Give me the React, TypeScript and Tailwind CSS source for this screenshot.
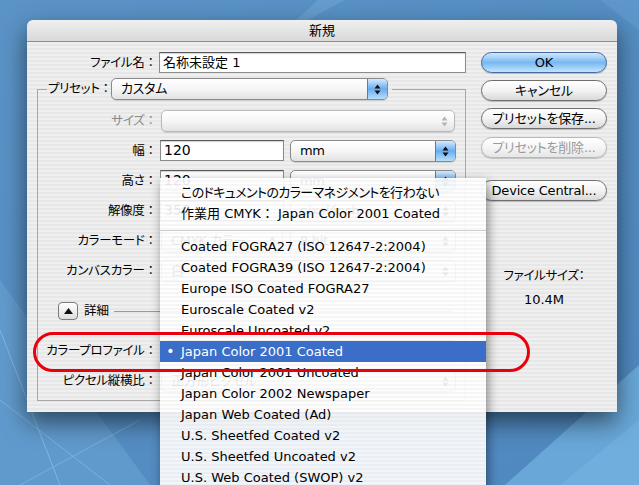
import React from 'react';

const UI = "font-['DejaVu_Sans','Noto_Sans_CJK_JP',sans-serif]";
const PALT = "[font-feature-settings:'palt']";

const STRIPES =
  'bg-[repeating-linear-gradient(180deg,#efefef_0px,#efefef_2px,#e7e7e7_2px,#e7e7e7_4px)]';

function Arrows({ disabled }: { disabled?: boolean }) {
  const c = disabled ? '#b4b4b4' : '#111';
  return (
    <svg width="7" height="13" viewBox="0 0 7 13">
      <path d="M3.5 1.5 L6.5 5.5 H0.5 Z" fill={c} />
      <path d="M3.5 11.5 L6.5 7.5 H0.5 Z" fill={c} />
    </svg>
  );
}

function Popup({
  value,
  w,
  blue,
  disabled,
  className = '',
}: {
  value?: string;
  w: string;
  blue?: boolean;
  disabled?: boolean;
  className?: string;
}) {
  return (
    <div
      className={`flex h-[22px] ${w} ${className} overflow-hidden rounded-[5px] border ${
        disabled ? 'border-[#b9b9b9]' : 'border-[#8a8a8a]'
      } bg-linear-to-b from-white via-[#f6f6f6] to-[#e2e2e2] shadow-[0_1px_1px_rgba(0,0,0,0.12)]`}
    >
      <div className={`flex-1 truncate pl-[9px] text-[13px] leading-[20px] tracking-[-0.3px] ${PALT}`}>{value}</div>
      <div
        className={`flex w-[20px] items-center justify-center ${
          blue ? 'border-l border-[#4d7fbd] bg-linear-to-b from-[#d4eafd] via-[#68adf0] to-[#b6defd]' : ''
        }`}
      >
        <Arrows disabled={disabled} />
      </div>
    </div>
  );
}

function Field({ value, w, className = '' }: { value: string; w: string; className?: string }) {
  return (
    <div
      className={`h-[21px] ${w} ${className} border border-[#8c8c8c] border-t-[#5a5a5a] bg-white pl-[3px] leading-[19px] shadow-[inset_0_1px_1px_rgba(0,0,0,0.18)]`}
    >
      {value}
    </div>
  );
}

function Label({ text, w, gray }: { text: string; w: string; gray?: boolean }) {
  return (
    <div
      className={`${w} h-[22px] shrink-0 whitespace-nowrap text-right text-[12.5px] leading-[22px] ${
        gray ? 'text-[#8a8a8a]' : 'text-black'
      }`}
    >
      <span className={`${PALT} tracking-[-0.3px]`}>{text}</span>
      <span>：</span>
    </div>
  );
}

function Row({ label, gray, children }: { label: string; gray?: boolean; children: React.ReactNode }) {
  return (
    <div className="flex h-[30px] items-start">
      <Label text={label} w="w-[119px]" gray={gray} />
      {children}
    </div>
  );
}

function Button({
  label,
  primary,
  disabled,
  className = '',
}: {
  label: string;
  primary?: boolean;
  disabled?: boolean;
  className?: string;
}) {
  const look = primary
    ? 'border-[#46689a] bg-linear-to-b from-[#d0e8fc] via-[#78b8f1] to-[#c0e4fe] text-black'
    : disabled
    ? 'border-[#b8b8b8] bg-linear-to-b from-white via-[#f5f5f5] to-[#e6e6e6] text-[#9a9a9a]'
    : 'border-[#6f6f6f] bg-linear-to-b from-white via-[#f3f3f3] to-[#d9d9d9] text-black';
  return (
    <div
      className={`flex h-[21px] w-[126px] items-center justify-center rounded-full border text-[13px] tracking-[-0.2px] shadow-[0_1px_1px_rgba(0,0,0,0.2)] ${look} ${className} ${PALT}`}
    >
      {label}
    </div>
  );
}

function Wallpaper() {
  return (
    <svg className="absolute inset-0" width="639" height="485" viewBox="0 0 639 485">
      <defs>
        <linearGradient id="wp" x1="0" y1="0" x2="1" y2="1">
          <stop offset="0" stopColor="#5b93c7" />
          <stop offset="1" stopColor="#4f88bf" />
        </linearGradient>
      </defs>
      <rect width="639" height="485" fill="url(#wp)" />
      <polygon points="318,0 345,0 300,24 292,24" fill="#7fb4e0" opacity="0.35" />
      <polygon points="600,0 639,0 639,30" fill="#6ba6d6" opacity="0.4" />
      <polygon points="505,485 639,365 639,485" fill="#68a7d8" />
      <polygon points="560,485 639,420 639,485" fill="#74b1df" opacity="0.7" />
      <polygon points="0,280 0,485 150,485" fill="#69a4d4" opacity="0.55" />
      <line x1="0" y1="330" x2="60" y2="485" stroke="#9cc7ea" strokeWidth="1" opacity="0.6" />
      <line x1="0" y1="400" x2="110" y2="485" stroke="#9cc7ea" strokeWidth="1" opacity="0.5" />
      <line x1="20" y1="485" x2="140" y2="420" stroke="#9cc7ea" strokeWidth="1" opacity="0.45" />
    </svg>
  );
}

const MENU: (string | null)[] = [
  'このドキュメントのカラーマネジメントを行わない',
  '作業用 CMYK： Japan Color 2001 Coated',
  null,
  'Coated FOGRA27 (ISO 12647-2:2004)',
  'Coated FOGRA39 (ISO 12647-2:2004)',
  'Europe ISO Coated FOGRA27',
  'Euroscale Coated v2',
  'Euroscale Uncoated v2',
  'Japan Color 2001 Coated',
  'Japan Color 2001 Uncoated',
  'Japan Color 2002 Newspaper',
  'Japan Web Coated (Ad)',
  'U.S. Sheetfed Coated v2',
  'U.S. Sheetfed Uncoated v2',
  'U.S. Web Coated (SWOP) v2',
];

function Menu() {
  return (
    <div className="absolute left-[160px] top-[178px] h-[320px] w-[326px] bg-[repeating-linear-gradient(180deg,rgba(255,255,255,0.92)_0px,rgba(255,255,255,0.92)_2px,rgba(247,247,247,0.92)_2px,rgba(247,247,247,0.92)_4px)] pt-[4px] shadow-[2px_4px_10px_rgba(0,0,0,0.45)]">
      {MENU.map((item, i) =>
        item === null ? (
          <div key={i} className="flex h-[12px] items-center">
            <div className="h-px w-full bg-[#cdcdcd]" />
          </div>
        ) : item === 'Japan Color 2001 Coated' ? (
          <div key={i} className="flex h-[21px] items-center bg-[#3a6ec8] text-[13px] text-white">
            <span className="w-[21px] text-center text-[14px]">•</span>
            <span>{item}</span>
          </div>
        ) : (
          <div
            key={i}
            className={`flex h-[21px] items-center whitespace-pre pl-[21px] text-[13px] text-black ${
              i === 0 ? `${PALT} tracking-[-0.6px]` : ''
            }`}
          >
            {item}
          </div>
        )
      )}
    </div>
  );
}

function Dialog() {
  return (
    <div className="absolute left-[27px] top-[20px] flex h-[392px] w-[590px] flex-col overflow-hidden rounded-t-[6px] shadow-[0_10px_24px_rgba(0,0,0,0.55)]">
      <div className="flex h-[22px] shrink-0 items-center justify-center border-b border-[#8d8d8d] bg-linear-to-b from-[#efefef] to-[#d9d9d9] text-[13px] text-black">
        新規
      </div>
      <div className={`flex flex-1 pt-[10px] ${STRIPES}`}>
        {/* left side */}
        <div className="w-[454px]">
          <div className="flex h-[21px]">
            <Label text="ファイル名" w="w-[130px]" />
            <Field value="名称未設定 1" w="w-[307px]" className="ml-[2px] text-[13px]" />
          </div>

          <div className="ml-[10px] mt-[5px] w-[429px]">
            <div className="flex h-[22px]">
              <div className="mt-[11px] w-[10px] border-l border-t border-[#a7a7a7]" />
              <div className="w-[64px] pl-[1px]">
                <Label text="プリセット" w="w-auto text-left" />
              </div>
              <Popup value="カスタム" w="w-[277px]" blue />
              <div className="ml-[4px] mt-[11px] flex-1 border-r border-t border-[#a7a7a7]" />
            </div>
            <div className="flex h-[301px] flex-col border-b border-l border-r border-[#a7a7a7] pt-[10px]">
              <Row label="サイズ" gray>
                <Popup w="w-[294px]" className="ml-[4px]" disabled />
              </Row>
              <Row label="幅">
                <Field value="120" w="w-[124px]" className="ml-[3px] text-[14px]" />
                <Popup value="mm" w="w-[166px]" className="ml-[6px]" blue />
              </Row>
              <Row label="高さ">
                <Field value="120" w="w-[124px]" className="ml-[3px] text-[14px]" />
                <Popup value="mm" w="w-[166px]" className="ml-[6px]" blue />
              </Row>
              <Row label="解像度">
                <Field value="350" w="w-[124px]" className="ml-[3px] text-[14px]" />
                <Popup value="pixel/inch" w="w-[166px]" className="ml-[6px]" />
              </Row>
              <Row label="カラーモード">
                <Popup value="CMYK カラー" w="w-[122px]" className="ml-[4px]" />
                <Popup value="8 bit" w="w-[166px]" className="ml-[7px]" />
              </Row>
              <Row label="カンバスカラー">
                <Popup value="白" w="w-[295px]" className="ml-[4px]" />
              </Row>

              <div className="mt-[12px] flex h-[18px] items-center">
                <div className="ml-[20px] flex h-[18px] w-[20px] items-center justify-center rounded-[4px] border border-[#7a7a7a] bg-linear-to-b from-white to-[#dedede]">
                  <svg width="9" height="6" viewBox="0 0 9 6">
                    <path d="M4.5 0 L9 6 H0 Z" fill="#111" />
                  </svg>
                </div>
                <span className="ml-[6px] text-[12.5px]">詳細</span>
                <div className="ml-[5px] mr-[12px] h-px flex-1 bg-[#9a9a9a]" />
              </div>

              <div className="mt-[20px]">
                <Row label="カラープロファイル">
                  <Popup value="Japan Color 2001 Coated" w="w-[295px]" className="ml-[4px]" />
                </Row>
                <Row label="ピクセル縦横比">
                  <Popup value="正方形ピクセル" w="w-[295px]" className="ml-[4px]" />
                </Row>
              </div>
            </div>
          </div>
        </div>

        {/* right side */}
        <div className="flex w-[126px] flex-col items-center">
          <Button label="OK" primary />
          <Button label="キャンセル" className="mt-[7px]" />
          <Button label="プリセットを保存..." className="mt-[7px]" />
          <Button label="プリセットを削除..." className="mt-[8px]" disabled />
          <Button label="Device Central..." className="mt-[22px]" />
          <div className={`mt-[67px] text-[12.5px] leading-[16px] tracking-[-0.3px] ${PALT}`}>ファイルサイズ：</div>
          <div className="mt-[8px] text-[13px] leading-[16px]">10.4M</div>
        </div>
      </div>
    </div>
  );
}

export default function App() {
  return (
    <div className={`relative h-[485px] w-[639px] overflow-hidden ${UI}`}>
      <Wallpaper />
      <Dialog />
      <Menu />
      <div className="absolute left-[33px] top-[332px] h-[40px] w-[497px] rounded-full border-[3px] border-[#e8000d]" />
    </div>
  );
}
